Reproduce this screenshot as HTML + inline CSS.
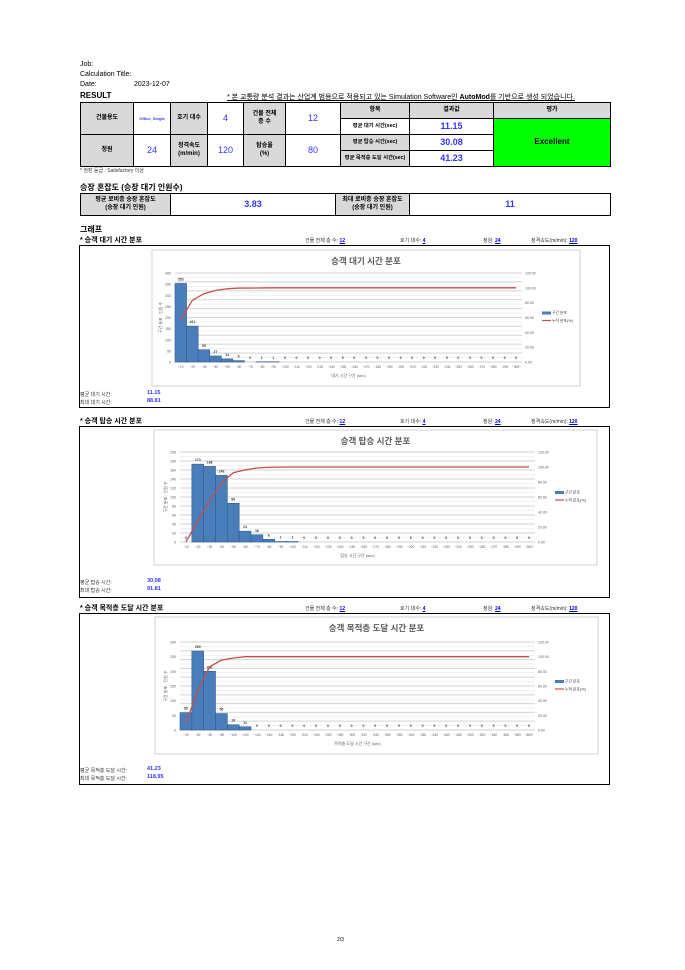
<!DOCTYPE html>
<html><head><meta charset="utf-8">
<style>
*{margin:0;padding:0;box-sizing:border-box}
body{width:685px;height:970px;background:#fff;position:relative;font-family:"Liberation Sans","Noto Sans CJK KR",sans-serif;color:#000;overflow:hidden}
.a{position:absolute;white-space:nowrap}
.t{font-size:7px}
table{border-collapse:collapse;position:absolute;table-layout:fixed}
td{border:1px solid #000;text-align:center;vertical-align:middle;font-size:6px;font-weight:bold;line-height:1.3;overflow:hidden}
.g{background:#d9d9d9}
.v{color:#3333ff;font-weight:normal;font-size:9px}
.vb{color:#3333ff;font-size:9px}
.nw{white-space:nowrap;font-size:5.3px}
.box{position:absolute;border:1.5px solid #000;left:79px;width:531px}
.u{color:#0000cc;text-decoration:underline;font-weight:bold}
.hd{font-size:5px;color:#333}
</style></head><body>
<div class="a t" style="left:80px;top:61px">Job:</div>
<div class="a t" style="left:80px;top:71px">Calculation Title:</div>
<div class="a t" style="left:80px;top:81px">Date:</div>
<div class="a t" style="left:134px;top:81px">2023-12-07</div>
<div class="a" style="left:80px;top:91px;font-size:8px;font-weight:bold">RESULT</div>
<div class="a" style="left:227px;top:92px;font-size:7px;text-decoration:underline">* 본 교통량 분석 결과는 산업계 범용으로 적용되고 있는 Simulation Software인 <b>AutoMod</b>를 기반으로 생성 되었습니다.</div>
<table style="left:80px;top:102px;width:530px;height:64px;border:1.5px solid #000">
<colgroup><col style="width:53px"><col style="width:37px"><col style="width:37px"><col style="width:36px"><col style="width:42px"><col style="width:55px"><col style="width:69px"><col style="width:84px"><col style="width:117px"></colgroup>
<tr style="height:16px"><td class="g" rowspan="2">건물용도</td><td rowspan="2" style="color:#3333ff;font-size:4px">Office_Single</td><td class="g" rowspan="2">호기 대수</td><td class="v" rowspan="2">4</td><td class="g" rowspan="2">건물 전체<br>층 수</td><td class="v" rowspan="2">12</td><td class="g">항목</td><td class="g">결과값</td><td class="g">평가</td></tr>
<tr style="height:16px"><td class="nw">평균 대기 시간(sec)</td><td class="vb">11.15</td><td rowspan="3" style="background:#00ff00;font-size:8px">Excellent</td></tr>
<tr style="height:16px"><td class="g" rowspan="2">정원</td><td class="v" rowspan="2">24</td><td class="g" rowspan="2">정격속도<br>(m/min)</td><td class="v" rowspan="2">120</td><td class="g" rowspan="2">탑승율<br>(%)</td><td class="v" rowspan="2">80</td><td class="g nw">평균 탑승 시간(sec)</td><td class="vb">30.08</td></tr>
<tr style="height:16px"><td class="g nw">평균 목적층 도달 시간(sec)</td><td class="vb">41.23</td></tr>
</table>
<div class="a" style="left:80px;top:167px;font-size:5px;color:#333">* 권장 등급 : Satisfactory 이상</div>
<div class="a" style="left:80px;top:182px;font-size:8px;font-weight:bold">승장 혼잡도 (승장 대기 인원수)</div>
<table style="left:80px;top:193px;width:530px;height:23px;border:1.5px solid #000">
<colgroup><col style="width:90px"><col style="width:165px"><col style="width:74px"><col style="width:201px"></colgroup>
<tr><td class="g">평균 로비층 승장 혼잡도<br>(승장 대기 인원)</td><td class="vb">3.83</td><td class="g">최대 로비층 승장 혼잡도<br>(승장 대기 인원)</td><td class="vb">11</td></tr>
</table>
<div class="a" style="left:80px;top:224px;font-size:8px;font-weight:bold">그래프</div>

<div class="a" style="left:80px;top:235px;font-size:7px;font-weight:bold">* 승객 대기 시간 분포</div>
<div class="a" style="left:80px;top:416px;font-size:7px;font-weight:bold">* 승객 탑승 시간 분포</div>
<div class="a" style="left:80px;top:603px;font-size:7px;font-weight:bold">* 승객 목적층 도달 시간 분포</div>
<div id="hdrs"></div>

<div class="box" style="top:245px;height:163px"></div>
<div class="box" style="top:426px;height:172px"></div>
<div class="box" style="top:613px;height:172px"></div>

<div class="a hd" style="left:80px;top:391px">평균 대기 시간:</div><div class="a" style="left:147px;top:390px;font-size:5.5px;color:#3333ff;font-weight:bold">11.15</div>
<div class="a hd" style="left:80px;top:399px">최대 대기 시간:</div><div class="a" style="left:147px;top:398px;font-size:5.5px;color:#3333ff;font-weight:bold">88.81</div>
<div class="a hd" style="left:80px;top:579px">평균 탑승 시간:</div><div class="a" style="left:147px;top:578px;font-size:5.5px;color:#3333ff;font-weight:bold">30.08</div>
<div class="a hd" style="left:80px;top:587px">최대 탑승 시간:</div><div class="a" style="left:147px;top:586px;font-size:5.5px;color:#3333ff;font-weight:bold">91.81</div>
<div class="a hd" style="left:80px;top:767px">평균 목적층 도달 시간:</div><div class="a" style="left:147px;top:766px;font-size:5.5px;color:#3333ff;font-weight:bold">41.23</div>
<div class="a hd" style="left:80px;top:775px">최대 목적층 도달 시간:</div><div class="a" style="left:147px;top:774px;font-size:5.5px;color:#3333ff;font-weight:bold">118.95</div>

<svg id="c1" class="a" style="left:0;top:0" width="685" height="970"></svg>
<div class="a" style="left:337px;top:937px;font-size:5px">2/3</div>

<script>
var hd='';
[235,416,603].forEach(function(y){
 hd+='<div class="a hd" style="left:305px;top:'+(y+2)+'px">건물 전체 층 수: <span class="u">12</span></div>';
 hd+='<div class="a hd" style="left:400px;top:'+(y+2)+'px">호기 대수: <span class="u">4</span></div>';
 hd+='<div class="a hd" style="left:483px;top:'+(y+2)+'px">정원: <span class="u">24</span></div>';
 hd+='<div class="a hd" style="left:531px;top:'+(y+2)+'px">정격속도(m/min): <span class="u">120</span></div>';
});
document.getElementById('hdrs').innerHTML=hd;
function chart(o){
 var s='';
 s+='<rect x="'+o.fx+'" y="'+o.fy+'" width="'+o.fw+'" height="'+o.fh+'" fill="#fff" stroke="#d9d9d9" stroke-width="1.2"/>';
 s+='<text x="'+(o.fx+o.fw/2)+'" y="'+(o.fy+14)+'" font-size="8.5" fill="#595959" text-anchor="middle" font-weight="bold">'+o.title+'</text>';
 var L=o.px,R=o.px2,T=o.top,B=o.bot;
 for(var i=0;i<=20;i++){var y=T+(B-T)*i/20;s+='<line x1="'+L+'" x2="'+R+'" y1="'+y+'" y2="'+y+'" stroke="'+(i%2?'#eee':'#d9d9d9')+'" stroke-width="'+(i%2?0.8:1.2)+'"/>';}
 for(var i=0;i<=o.nl;i++){var y=T+(B-T)*i/o.nl;s+='<text x="'+(L-4)+'" y="'+(y+1.5)+'" font-size="3.5" fill="#595959" text-anchor="end">'+(o.max-o.max*i/o.nl)+'</text>';}
 for(var i=0;i<=6;i++){var y=T+(B-T)*i/6;s+='<text x="'+(R+3)+'" y="'+(y+1.5)+'" font-size="3.5" fill="#595959">'+(120-20*i).toFixed(2)+'</text>';}
 var n=o.v.length,w=(R-L)/n,tot=o.v.reduce(function(a,b){return a+b},0),cum=0,pts=[];
 for(var i=0;i<n;i++){var x=L+i*w,h=(B-T)*o.v[i]/o.max;
  if(o.v[i]>0)s+='<rect x="'+x+'" y="'+(B-h)+'" width="'+w+'" height="'+h+'" fill="#4a7ebb" stroke="#2c5d98" stroke-width="0.6"/>';
  s+='<text x="'+(x+w/2)+'" y="'+(B-h-3)+'" font-size="3.5" fill="#404040" text-anchor="middle" font-weight="bold">'+o.v[i]+'</text>';
  s+='<text x="'+(x+w/2)+'" y="'+(B+6)+'" font-size="3.2" fill="#595959" text-anchor="middle">~'+(o.st*(i+1))+(i==n-1?'^':'')+'</text>';
  cum+=o.v[i];pts.push((x+w/2)+','+(B-(B-T)*(cum/tot*100)/120));}
 s+='<polyline points="'+pts.join(' ')+'" fill="none" stroke="#c0504d" stroke-width="1.3"/>';
 s+='<text x="'+((L+R)/2)+'" y="'+(B+15)+'" font-size="4" fill="#595959" text-anchor="middle">'+o.xt+' (sec)</text>';
 s+='<text transform="translate('+(L-13)+','+((T+B)/2)+') rotate(-90)" font-size="4" fill="#595959" text-anchor="middle">구간 분포 : 인원 수</text>';
 var lx=R+20,ly=(T+B)/2;
 s+='<rect x="'+lx+'" y="'+(ly-6)+'" width="9" height="3" fill="#4a7ebb"/><text x="'+(lx+10)+'" y="'+(ly-3.5)+'" font-size="3.8" fill="#404040">구간 분포</text>';
 s+='<line x1="'+lx+'" x2="'+(lx+9)+'" y1="'+(ly+3)+'" y2="'+(ly+3)+'" stroke="#c0504d" stroke-width="1.2"/><text x="'+(lx+10)+'" y="'+(ly+4.5)+'" font-size="3.8" fill="#404040">누적 분포(%)</text>';
 return s;
}
function z(a,n){while(a.length<n)a.push(0);return a;}
var s='';
s+=chart({fx:152,fy:250,fw:428,fh:136,title:'승객 대기 시간 분포',px:175,px2:522,top:273,bot:362,max:400,nl:8,st:10,v:z([353,161,55,27,14,6,0,1,1],30),xt:'대기 시간 구간'});
s+=chart({fx:154,fy:430,fw:443,fh:135,title:'승객 탑승 시간 분포',px:180,px2:535,top:452,bot:542,max:200,nl:10,st:10,v:z([0,173,168,148,86,24,16,6,1,1],30),xt:'탑승 시간 구간'});
s+=chart({fx:155,fy:617,fw:443,fh:137,title:'승객 목적층 도달 시간 분포',px:180,px2:535,top:642,bot:730,max:300,nl:6,st:20,v:z([59,269,200,56,18,11],30),xt:'목적층 도달 시간 구간'});
document.getElementById('c1').innerHTML=s;
</script>
</body></html>
